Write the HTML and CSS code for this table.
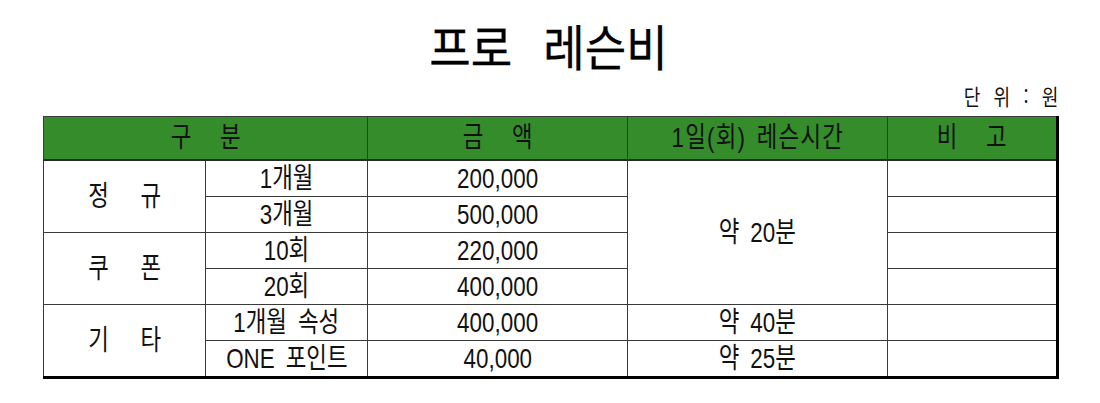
FILE: index.html
```html
<!DOCTYPE html>
<html lang="ko">
<head>
<meta charset="utf-8">
<title>프로 레슨비</title>
<link rel="stylesheet" href="styles.css">
</head>
<body>
<div class="page">
  <h1 class="title"><span class="sq">프로 레슨비</span></h1>
  <div class="unit"><span class="sq">단 위 : 원</span></div>
  <table class="fees">
    <colgroup>
      <col class="c1"><col class="c2"><col class="c3"><col class="c4"><col class="c5">
    </colgroup>
    <thead>
      <tr>
        <th colspan="2"><span class="sq wide">구 분</span></th>
        <th><span class="sq wide">금 액</span></th>
        <th><span class="sq spaced">1일(회) 레슨시간</span></th>
        <th class="last"><span class="sq wide">비 고</span></th>
      </tr>
    </thead>
    <tbody>
      <tr>
        <td rowspan="2"><span class="sq wider">정 규</span></td>
        <td><span class="sq">1개월</span></td>
        <td><span class="sq">200,000</span></td>
        <td rowspan="4"><span class="sq mid">약 20분</span></td>
        <td class="last"></td>
      </tr>
      <tr>
        <td><span class="sq">3개월</span></td>
        <td><span class="sq">500,000</span></td>
        <td class="last"></td>
      </tr>
      <tr>
        <td rowspan="2"><span class="sq wider">쿠 폰</span></td>
        <td><span class="sq">10회</span></td>
        <td><span class="sq">220,000</span></td>
        <td class="last"></td>
      </tr>
      <tr>
        <td><span class="sq">20회</span></td>
        <td><span class="sq">400,000</span></td>
        <td class="last"></td>
      </tr>
      <tr>
        <td rowspan="2" class="bottom"><span class="sq wider">기 타</span></td>
        <td><span class="sq mid">1개월 속성</span></td>
        <td><span class="sq">400,000</span></td>
        <td><span class="sq mid">약 40분</span></td>
        <td class="last"></td>
      </tr>
      <tr>
        <td class="bottom"><span class="sq mid">ONE 포인트</span></td>
        <td class="bottom"><span class="sq">40,000</span></td>
        <td class="bottom"><span class="sq mid">약 25분</span></td>
        <td class="bottom last"></td>
      </tr>
    </tbody>
  </table>
</div>
</body>
</html>
```

FILE: styles.css
```css
html, body {
  margin: 0;
  padding: 0;
  background: #ffffff;
}

body {
  font-family: "Liberation Sans", "Noto Sans CJK KR", sans-serif;
  color: #111111;
}

.page {
  width: 1100px;
  padding-top: 14px;
}

.sq {
  display: inline-block;
  transform: scaleX(0.8);
  white-space: nowrap;
}

.title {
  margin: 0;
  text-align: center;
  font-family: "Noto Sans CJK KR", sans-serif;
  font-size: 49px;
  font-weight: 400;
  line-height: 62px;
  word-spacing: 20px;
  padding-right: 2px;
  color: #000000;
}

.title .sq {
  transform: scaleX(0.92);
  -webkit-text-stroke: 0.3px #000000;
}

.unit {
  text-align: right;
  padding-right: 42px;
  font-family: "Noto Sans CJK KR", sans-serif;
  font-size: 22px;
  line-height: 28px;
  margin-top: 5px;
  word-spacing: 10px;
}

.unit .sq {
  transform-origin: right center;
  transform: scaleX(0.82);
}

.fees {
  margin-left: 43px;
  margin-top: 7px;
  border-collapse: collapse;
  table-layout: fixed;
  width: 1014px;
  font-size: 28px;
}

.c1 { width: 162px; }
.c2 { width: 162px; }
.c3 { width: 260px; }
.c4 { width: 260px; }
.c5 { width: 170px; }

.fees th,
.fees td {
  border: 1px solid #3a3a3a;
  text-align: center;
  vertical-align: middle;
  padding: 0;
  line-height: 30px;
}

.fees th {
  background: #348c2a;
  font-weight: normal;
  height: 42px;
  border-bottom: 2px solid #2a2a2a;
  color: #111111;
}

.fees td {
  height: 35px;
}

.fees .last {
  border-right: 3px solid #000000;
}

.fees .bottom {
  border-bottom: 3px solid #000000;
}

.wide {
  word-spacing: 28px;
}

.spaced {
  letter-spacing: 1.5px;
  word-spacing: 4px;
}

.mid {
  word-spacing: 6px;
}

.wider {
  word-spacing: 32px;
}
```
